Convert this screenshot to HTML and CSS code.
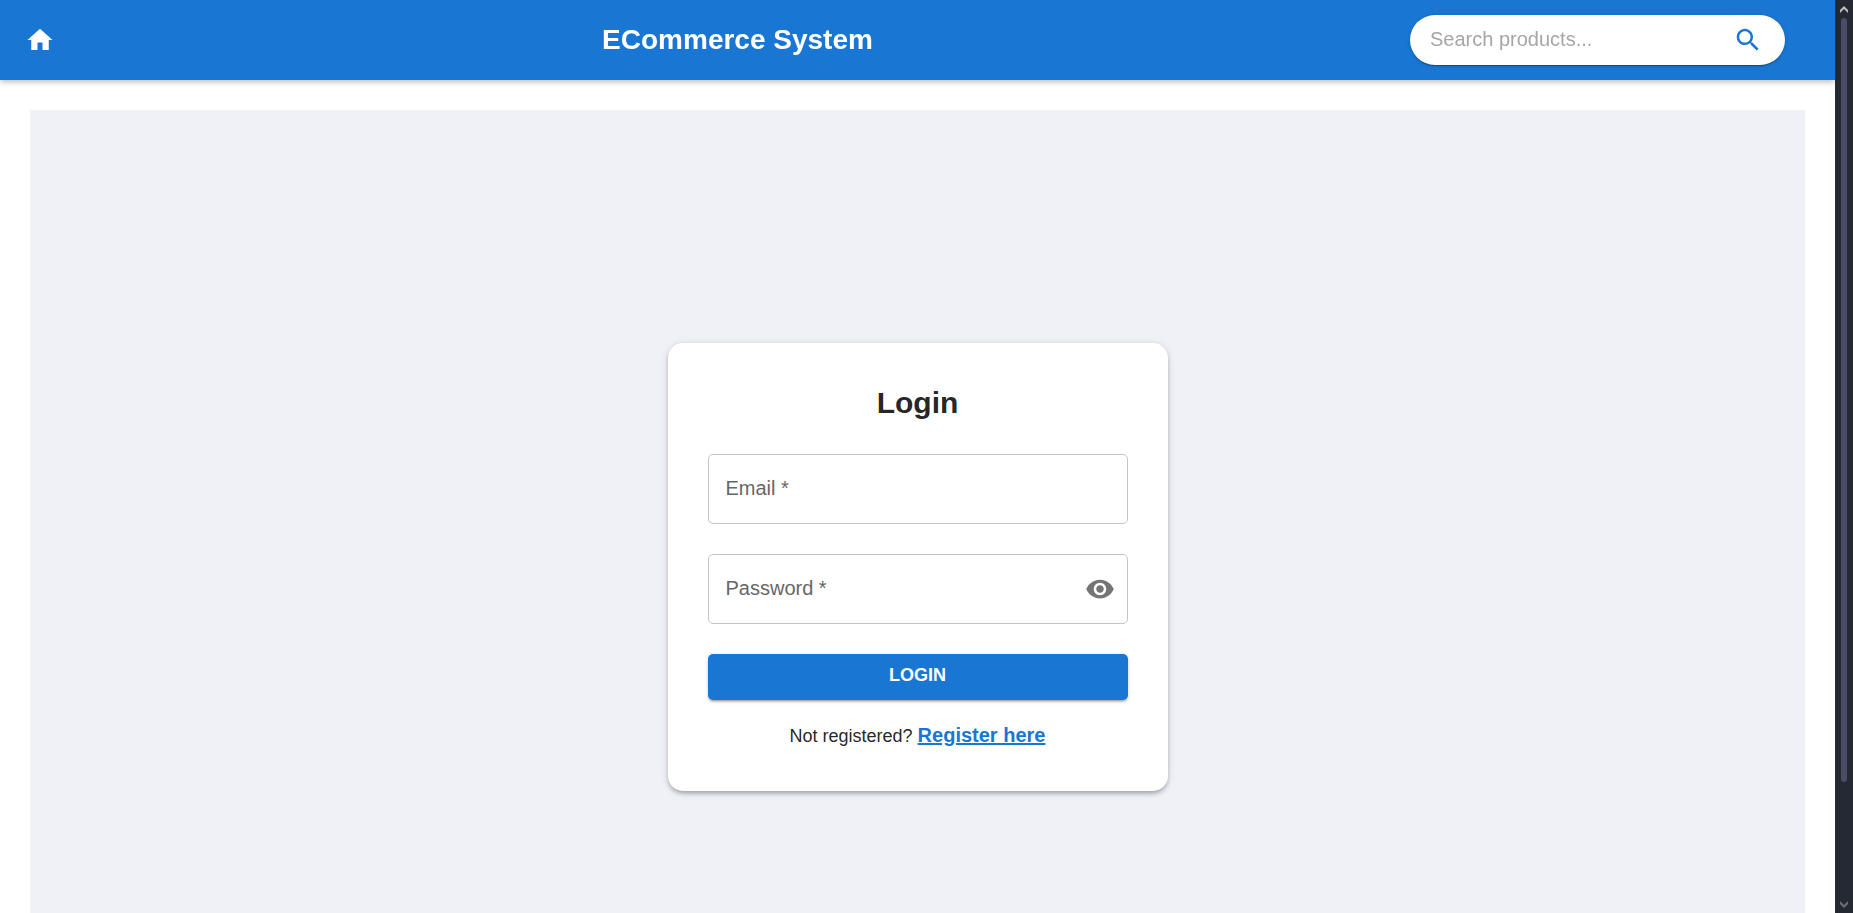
FILE: index.html
```html
<!DOCTYPE html>
<html lang="en">
<head>
  <meta charset="utf-8">
  <meta name="viewport" content="width=device-width, initial-scale=1">
  <title>ECommerce System</title>
  <link rel="stylesheet" href="styles.css">
</head>
<body>
  <div class="window">
    <div class="page">
      <header class="app-bar">
        <a class="icon-button home" href="#" aria-label="Home">
          <svg class="icon" viewBox="0 0 24 24"><path d="M10 20v-6h4v6h5v-8h3L12 3 2 12h3v8z"/></svg>
        </a>
        <div class="brand">ECommerce System</div>
        <form class="search" role="search">
          <input class="search-input" type="text" placeholder="Search products..." aria-label="Search products">
          <button class="icon-button search-button" type="button" aria-label="Search">
            <svg class="icon" viewBox="0 0 24 24"><path d="M15.5 14h-.79l-.28-.27C15.41 12.59 16 11.11 16 9.5 16 5.91 13.09 3 9.5 3S3 5.91 3 9.5 5.91 16 9.5 16c1.61 0 3.09-.59 4.23-1.57l.27.28v.79l5 4.99L20.49 19zm-6 0C7.01 14 5 11.99 5 9.5S7.01 5 9.5 5 14 7.01 14 9.5 11.99 14 9.5 14"/></svg>
          </button>
        </form>
      </header>
      <main class="content">
        <form class="card">
          <h1 class="card-title">Login</h1>
          <div class="field">
            <input class="field-input" id="email" type="email" placeholder=" " required>
            <label class="field-label" for="email">Email *</label>
          </div>
          <div class="field">
            <input class="field-input" id="password" type="password" placeholder=" " required>
            <label class="field-label" for="password">Password *</label>
            <button class="reveal" type="button" aria-label="Show password">
              <svg class="icon" viewBox="0 0 24 24"><path d="M12 4.5C7 4.5 2.73 7.61 1 12c1.73 4.39 6 7.5 11 7.5s9.27-3.11 11-7.5c-1.73-4.39-6-7.5-11-7.5M12 17c-2.76 0-5-2.24-5-5s2.24-5 5-5 5 2.24 5 5-2.24 5-5 5m0-8c-1.66 0-3 1.34-3 3s1.34 3 3 3 3-1.34 3-3-1.34-3-3-3"/></svg>
            </button>
          </div>
          <button class="submit" type="submit">LOGIN</button>
          <p class="register">Not registered? <a class="register-link" href="#">Register here</a></p>
        </form>
      </main>
    </div>
    <div class="scrollbar" aria-hidden="true">
      <svg class="arrow arrow-up" viewBox="0 0 8 7"><path d="M0 4 4 0l4 4v3L4 3 0 7z"/></svg>
      <div class="track"><div class="thumb"></div></div>
      <svg class="arrow arrow-down" viewBox="0 0 8 7"><path d="M0 3l4 4 4-4V0L4 4 0 0z"/></svg>
    </div>
  </div>
</body>
</html>
```

FILE: styles.css
```css
* {
  box-sizing: border-box;
}

body {
  margin: 0;
  font-family: "Liberation Sans", Arial, sans-serif;
  font-size: 20px;
  color: rgba(0, 0, 0, 0.87);
  background: #fff;
}

input,
button {
  font: inherit;
}

.window {
  display: flex;
  height: 100vh;
}

.page {
  flex: 1;
  min-width: 0;
  overflow-y: auto;
  scrollbar-width: none;
}

.app-bar {
  position: sticky;
  top: 0;
  z-index: 1;
  display: flex;
  align-items: center;
  justify-content: space-between;
  min-height: 80px;
  padding: 0 50px 0 15px;
  color: #fff;
  background: #1976d2;
  box-shadow: 0 2px 5px -1px rgba(0, 0, 0, 0.16), 0 3px 6px rgba(0, 0, 0, 0.14);
}

.icon {
  display: block;
  width: 30px;
  height: 30px;
  fill: currentColor;
}

.icon-button {
  display: block;
  padding: 10px;
  border: 0;
  border-radius: 50%;
  color: inherit;
  background: none;
  cursor: pointer;
}

.brand {
  font-size: 28px;
  font-weight: 700;
  line-height: 40px;
}

.search {
  display: flex;
  align-items: center;
  width: 375px;
  height: 50px;
  padding: 0 12px 0 20px;
  border-radius: 25px;
  background: #fff;
  box-shadow: 0 2px 1px -1px rgba(0, 0, 0, 0.2), 0 1px 1px rgba(0, 0, 0, 0.14), 0 1px 4px rgba(0, 0, 0, 0.12);
}

.search-input {
  flex: 1;
  min-width: 0;
  padding: 0 0 2px;
  border: 0;
  outline: 0;
  background: none;
}

.search-input::placeholder {
  color: #a6a6a6;
  opacity: 1;
}

.search-button {
  color: #1976d2;
}

.content {
  display: flex;
  align-items: center;
  justify-content: center;
  min-height: 100vh;
  margin: 30px;
  background: #f0f1f6;
}

.card {
  display: flex;
  flex-direction: column;
  width: 500px;
  padding: 40px;
  border-radius: 15px;
  background: #fff;
  box-shadow: 0 4px 5px -2px rgba(0, 0, 0, 0.2), 0 2px 5px rgba(0, 0, 0, 0.14), 0 1px 10px rgba(0, 0, 0, 0.08);
}

.card-title {
  margin: 0 0 31px;
  font-size: 30px;
  line-height: 40px;
  text-align: center;
}

.field {
  position: relative;
  margin-bottom: 30px;
}

.field-input {
  display: block;
  width: 100%;
  height: 70px;
  padding: 0 17px;
  border: 1px solid #c4c4c4;
  border-radius: 5px;
  background: none;
}

.field-label {
  position: absolute;
  top: 20px;
  left: 18px;
  line-height: 28px;
  color: #666;
  pointer-events: none;
}

.field-input:focus + .field-label,
.field-input:not(:placeholder-shown) + .field-label {
  top: -14px;
  padding: 0 4px;
  font-size: 17px;
  background: #fff;
}

.reveal {
  position: absolute;
  top: 20px;
  right: 13px;
  padding: 0;
  border: 0;
  color: #757575;
  background: none;
  cursor: pointer;
}

.submit {
  height: 46px;
  padding: 0 20px 2px;
  border: 0;
  border-radius: 5px;
  font-size: 18px;
  font-weight: 700;
  color: #fff;
  background: #1976d2;
  box-shadow: 0 3px 2px -2px rgba(0, 0, 0, 0.2), 0 2px 2px rgba(0, 0, 0, 0.14), 0 1px 5px rgba(0, 0, 0, 0.12);
  cursor: pointer;
}

.register {
  margin: 20px 0 0;
  font-size: 18px;
  line-height: 30px;
  text-align: center;
}

.register-link {
  font-size: 20px;
  font-weight: 700;
  color: #1976d2;
}

.scrollbar {
  display: flex;
  flex-direction: column;
  align-items: center;
  width: 18px;
  padding: 6px 0 5px;
  background: #252934;
}

.track {
  flex: 1;
  width: 6px;
  margin: 5px 0;
}

.thumb {
  height: 87%;
  border-radius: 3px;
  background: #4b4d66;
}

.arrow {
  width: 8px;
  height: 7px;
}

.arrow-up {
  fill: #bdbdbd;
}

.arrow-down {
  fill: #6e6e6e;
}
```
